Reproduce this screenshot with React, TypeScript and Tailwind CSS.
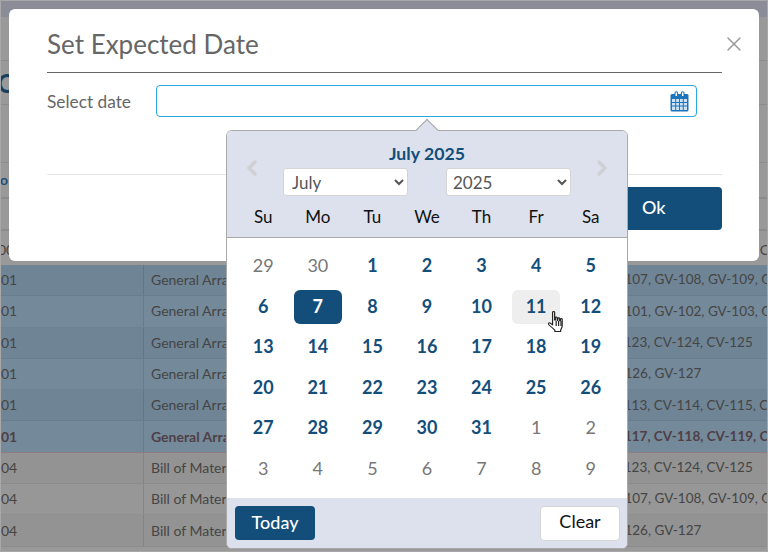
import { X, ChevronLeft, ChevronRight } from "lucide-react";

const WEEKDAYS = ["Su", "Mo", "Tu", "We", "Th", "Fr", "Sa"];

const DAYS: [number, boolean][] = [
  [29, false], [30, false], [1, true], [2, true], [3, true], [4, true], [5, true],
  [6, true], [7, true], [8, true], [9, true], [10, true], [11, true], [12, true],
  [13, true], [14, true], [15, true], [16, true], [17, true], [18, true], [19, true],
  [20, true], [21, true], [22, true], [23, true], [24, true], [25, true], [26, true],
  [27, true], [28, true], [29, true], [30, true], [31, true], [1, false], [2, false],
  [3, false], [4, false], [5, false], [6, false], [7, false], [8, false], [9, false],
];

const ROWS = [
  { id: "01", name: "General Arrangement", tags: "GV-107, GV-108, GV-109, GV-110", tone: "bg-[#6f8495]" },
  { id: "01", name: "General Arrangement", tags: "GV-101, GV-102, GV-103, GV-104", tone: "bg-[#748999]" },
  { id: "01", name: "General Arrangement", tags: "CV-123, CV-124, CV-125", tone: "bg-[#6f8495]" },
  { id: "01", name: "General Arrangement", tags: "GV-126, GV-127", tone: "bg-[#748999]" },
  { id: "01", name: "General Arrangement", tags: "CV-113, CV-114, CV-115, CV-116", tone: "bg-[#6f8495]" },
  { id: "01", name: "General Arrangement", tags: "CV-117, CV-118, CV-119, CV-120", tone: "bg-[#748999]", bold: true },
  { id: "04", name: "Bill of Materials", tags: "CV-123, CV-124, CV-125", tone: "bg-[#939393]" },
  { id: "04", name: "Bill of Materials", tags: "GV-107, GV-108, GV-109, GV-110", tone: "bg-[#979797]" },
  { id: "04", name: "Bill of Materials", tags: "GV-126, GV-127", tone: "bg-[#939393]" },
];

function CalendarIcon() {
  return (
    <svg width="19" height="21" viewBox="0 0 19 21" className="shrink-0">
      <rect x="0.5" y="3" width="18" height="17.5" rx="1.5" fill="#1c75bc" />
      <rect x="2" y="8" width="15" height="11" fill="#cfe2f3" />
      <path d="M2 11.5h15M2 15h15M5.7 8v11M9.5 8v11M13.3 8v11" stroke="#1c75bc" strokeWidth="1" />
      <path d="M5 5V2a1.3 1.3 0 0 1 2.6 0v3M11.4 5V2A1.3 1.3 0 0 1 14 2v3" fill="#fff" stroke="#1c75bc" strokeWidth="1.1" />
    </svg>
  );
}

function HandCursor() {
  return (
    <svg
      width="16"
      height="21"
      viewBox="0.7 0.5 13.3 20.2"
      preserveAspectRatio="none"
      className="absolute left-[548px] top-[311px]"
    >
      <path
        d="M4.5 1.8c0-1 1.7-1 1.7 0v7.4l.6.1V6.9c0-.9 1.5-.9 1.5 0v2.6h.6V7.6c0-.9 1.5-.9 1.5 0v2.2h.6V8.4c0-.9 1.5-.9 1.5 0v6c0 2-.7 3-1.3 4.4v1.4H6.400v-1.300C5 17.200 3.100 15.600 1.200 13.500c-.8-1 .5-2.100 1.400-1.300l1.900 1.700V1.800z"
        fill="#fff"
        stroke="#222"
        strokeWidth="1"
        strokeLinejoin="round"
      />
      <path d="M7.500 10v5M9.500 10v5M11.500 10v5" stroke="#222" strokeWidth="1" />
    </svg>
  );
}

export default function App() {
  return (
    <div className="relative h-[552px] w-[768px] overflow-hidden bg-[#999999] font-['Lato',_'Carlito',_sans-serif]">
      {/* page behind the backdrop */}
      <div className="flex h-full flex-col border border-[#a8a8a8] text-[14px] leading-none text-[#454545]">
        <div className="h-[16px] shrink-0 bg-[#8a8d98]" />
        <div className="h-[44px] shrink-0 border-b border-[#8c8c8c]" />
        <div className="flex h-[44px] shrink-0 items-center overflow-hidden border-b border-[#8c8c8c] text-[26px] font-bold text-[#173f5f]">
          <span className="-ml-[4px]">C</span>
        </div>
        <div className="h-[58px] shrink-0 border-b border-[#8c8c8c]" />
        <div className="flex h-[36px] shrink-0 items-center overflow-hidden border-b-2 border-[#8c8c8c] text-[14px] font-bold text-[#1c4d74]">
          <span className="-ml-[1px]">o</span>
        </div>
        <div className="h-[32px] shrink-0 border-b-2 border-[#8c8c8c]" />
        <div className="flex h-[34px] shrink-0 items-center justify-between overflow-hidden whitespace-nowrap pt-[4px] text-[14px]">
          <span className="-ml-[3px]">00</span>
          <span className="-mr-[2px]">C</span>
        </div>
        {ROWS.map((row, i) => (
          <div
            key={i}
            className={`flex h-[31.300px] shrink-0 items-center overflow-hidden border-b border-black/5 whitespace-nowrap ${row.tone} ${row.bold ? "border-y-[#8f7c86] font-bold text-[#4f3f47]" : ""}`}
          >
            <div className="flex h-full w-[143px] shrink-0 items-center border-r border-black/10">{row.id}</div>
            <div className="flex h-full w-[481px] shrink-0 items-center pl-[7px]">{row.name}</div>
            <div className="-ml-[24px] flex h-full items-center text-[13.500px]">{row.tags}</div>
          </div>
        ))}
      </div>

      {/* modal */}
      <div className="absolute left-[9px] top-[9px] flex h-[252px] w-[750px] flex-col rounded-[6px] bg-white pl-[38px] pr-[37px] text-[#666666]">
        <div className="flex h-[64px] shrink-0 items-center justify-between border-b border-[#666666] pt-[6px]">
          <h1 className="text-[26px] font-normal leading-none">Set Expected Date</h1>
          <X className="-mr-[24px] h-[24px] w-[24px] text-[#999999]" strokeWidth={1.5} />
        </div>
        <div className="mt-[12px] flex shrink-0 items-center">
          <label className="w-[109px] pt-[1px] text-[17.300px] leading-none">Select date</label>
          <div className="flex h-[32px] w-[541px] items-center justify-end rounded-[4px] border border-[#29a8e0] pr-[7px]">
            <CalendarIcon />
          </div>
        </div>
        <div className="mt-[57px] h-px shrink-0 bg-[#e4e4e4]" />
        <div className="mt-[12px] flex shrink-0 justify-end">
          <button className="flex h-[43px] w-[130px] items-center justify-start rounded-[4px] bg-[#134e7a] pb-[2px] pl-[50px] text-[18px] font-medium text-white">
            Ok
          </button>
        </div>
      </div>

      {/* date picker */}
      <div className="absolute left-[226px] top-[130px] flex h-[419px] w-[402px] flex-col rounded-[6px] border border-[#a9a9a9] bg-white">
        <div className="absolute -top-[9px] left-[192px] h-[16px] w-[16px] rotate-45 border-l border-t border-[#a9a9a9] bg-[#dce1ed]" />
        <div className="relative flex h-[107px] shrink-0 flex-col rounded-t-[5px] border-b border-[#a9a9a9] bg-[#dce1ed]">
          <div className="pt-[13px] text-center text-[17.700px] font-bold leading-[20px] text-[#134e7a]">July 2025</div>
          <div className="mt-[4px] flex items-center px-[13px]">
            <ChevronLeft className="h-[24px] w-[24px] -translate-y-[14px] text-[#cfd0d3]" strokeWidth={3.5} />
            <select
              defaultValue="July"
              className="ml-[19px] h-[28px] w-[125px] rounded-[3px] border border-[#d4d4d4] bg-white pl-[4px] text-[17px] text-[#555555]"
            >
              <option>July</option>
            </select>
            <select
              defaultValue="2025"
              className="ml-[38px] h-[28px] w-[125px] rounded-[3px] border border-[#d4d4d4] bg-white pl-[2px] text-[17px] text-[#555555]"
            >
              <option>2025</option>
            </select>
            <ChevronRight className="ml-[19px] h-[24px] w-[24px] -translate-y-[14px] text-[#cfd0d3]" strokeWidth={3.5} />
          </div>
          <div className="mt-[9px] grid grid-cols-7 px-[9px] text-center text-[17px] leading-[24px] text-[#111111]">
            {WEEKDAYS.map((d) => (
              <div key={d}>{d}</div>
            ))}
          </div>
        </div>
        <div className="grid flex-1 grid-cols-7 content-start gap-y-[6.500px] px-[9px] pt-[11px]">
          {DAYS.map(([day, current], i) => {
            const selected = current && day === 7;
            const hovered = current && day === 11;
            return (
              <div
                key={i}
                className={`mx-auto flex h-[34px] w-[48px] items-center justify-center rounded-[6px] pb-[2px] text-[18px] leading-none ${
                  selected
                    ? "bg-[#134e7a] font-bold text-white"
                    : hovered
                      ? "bg-[#eeeeee] font-bold text-[#134e7a]"
                      : current
                        ? "font-bold text-[#134e7a]"
                        : "text-[#777777]"
                }`}
              >
                {day}
              </div>
            );
          })}
        </div>
        <div className="flex h-[50px] shrink-0 items-center justify-between rounded-b-[5px] bg-[#dce1ed] pl-[8px] pr-[7px]">
          <button className="h-[34px] w-[80px] rounded-[4px] bg-[#134e7a] pb-[1px] text-[18px] font-medium text-white">
            Today
          </button>
          <button className="h-[35px] w-[80px] rounded-[4px] border border-[#d4d4d4] bg-white pb-[3px] text-[18px] text-[#111111]">
            Clear
          </button>
        </div>
      </div>

      <HandCursor />
    </div>
  );
}
